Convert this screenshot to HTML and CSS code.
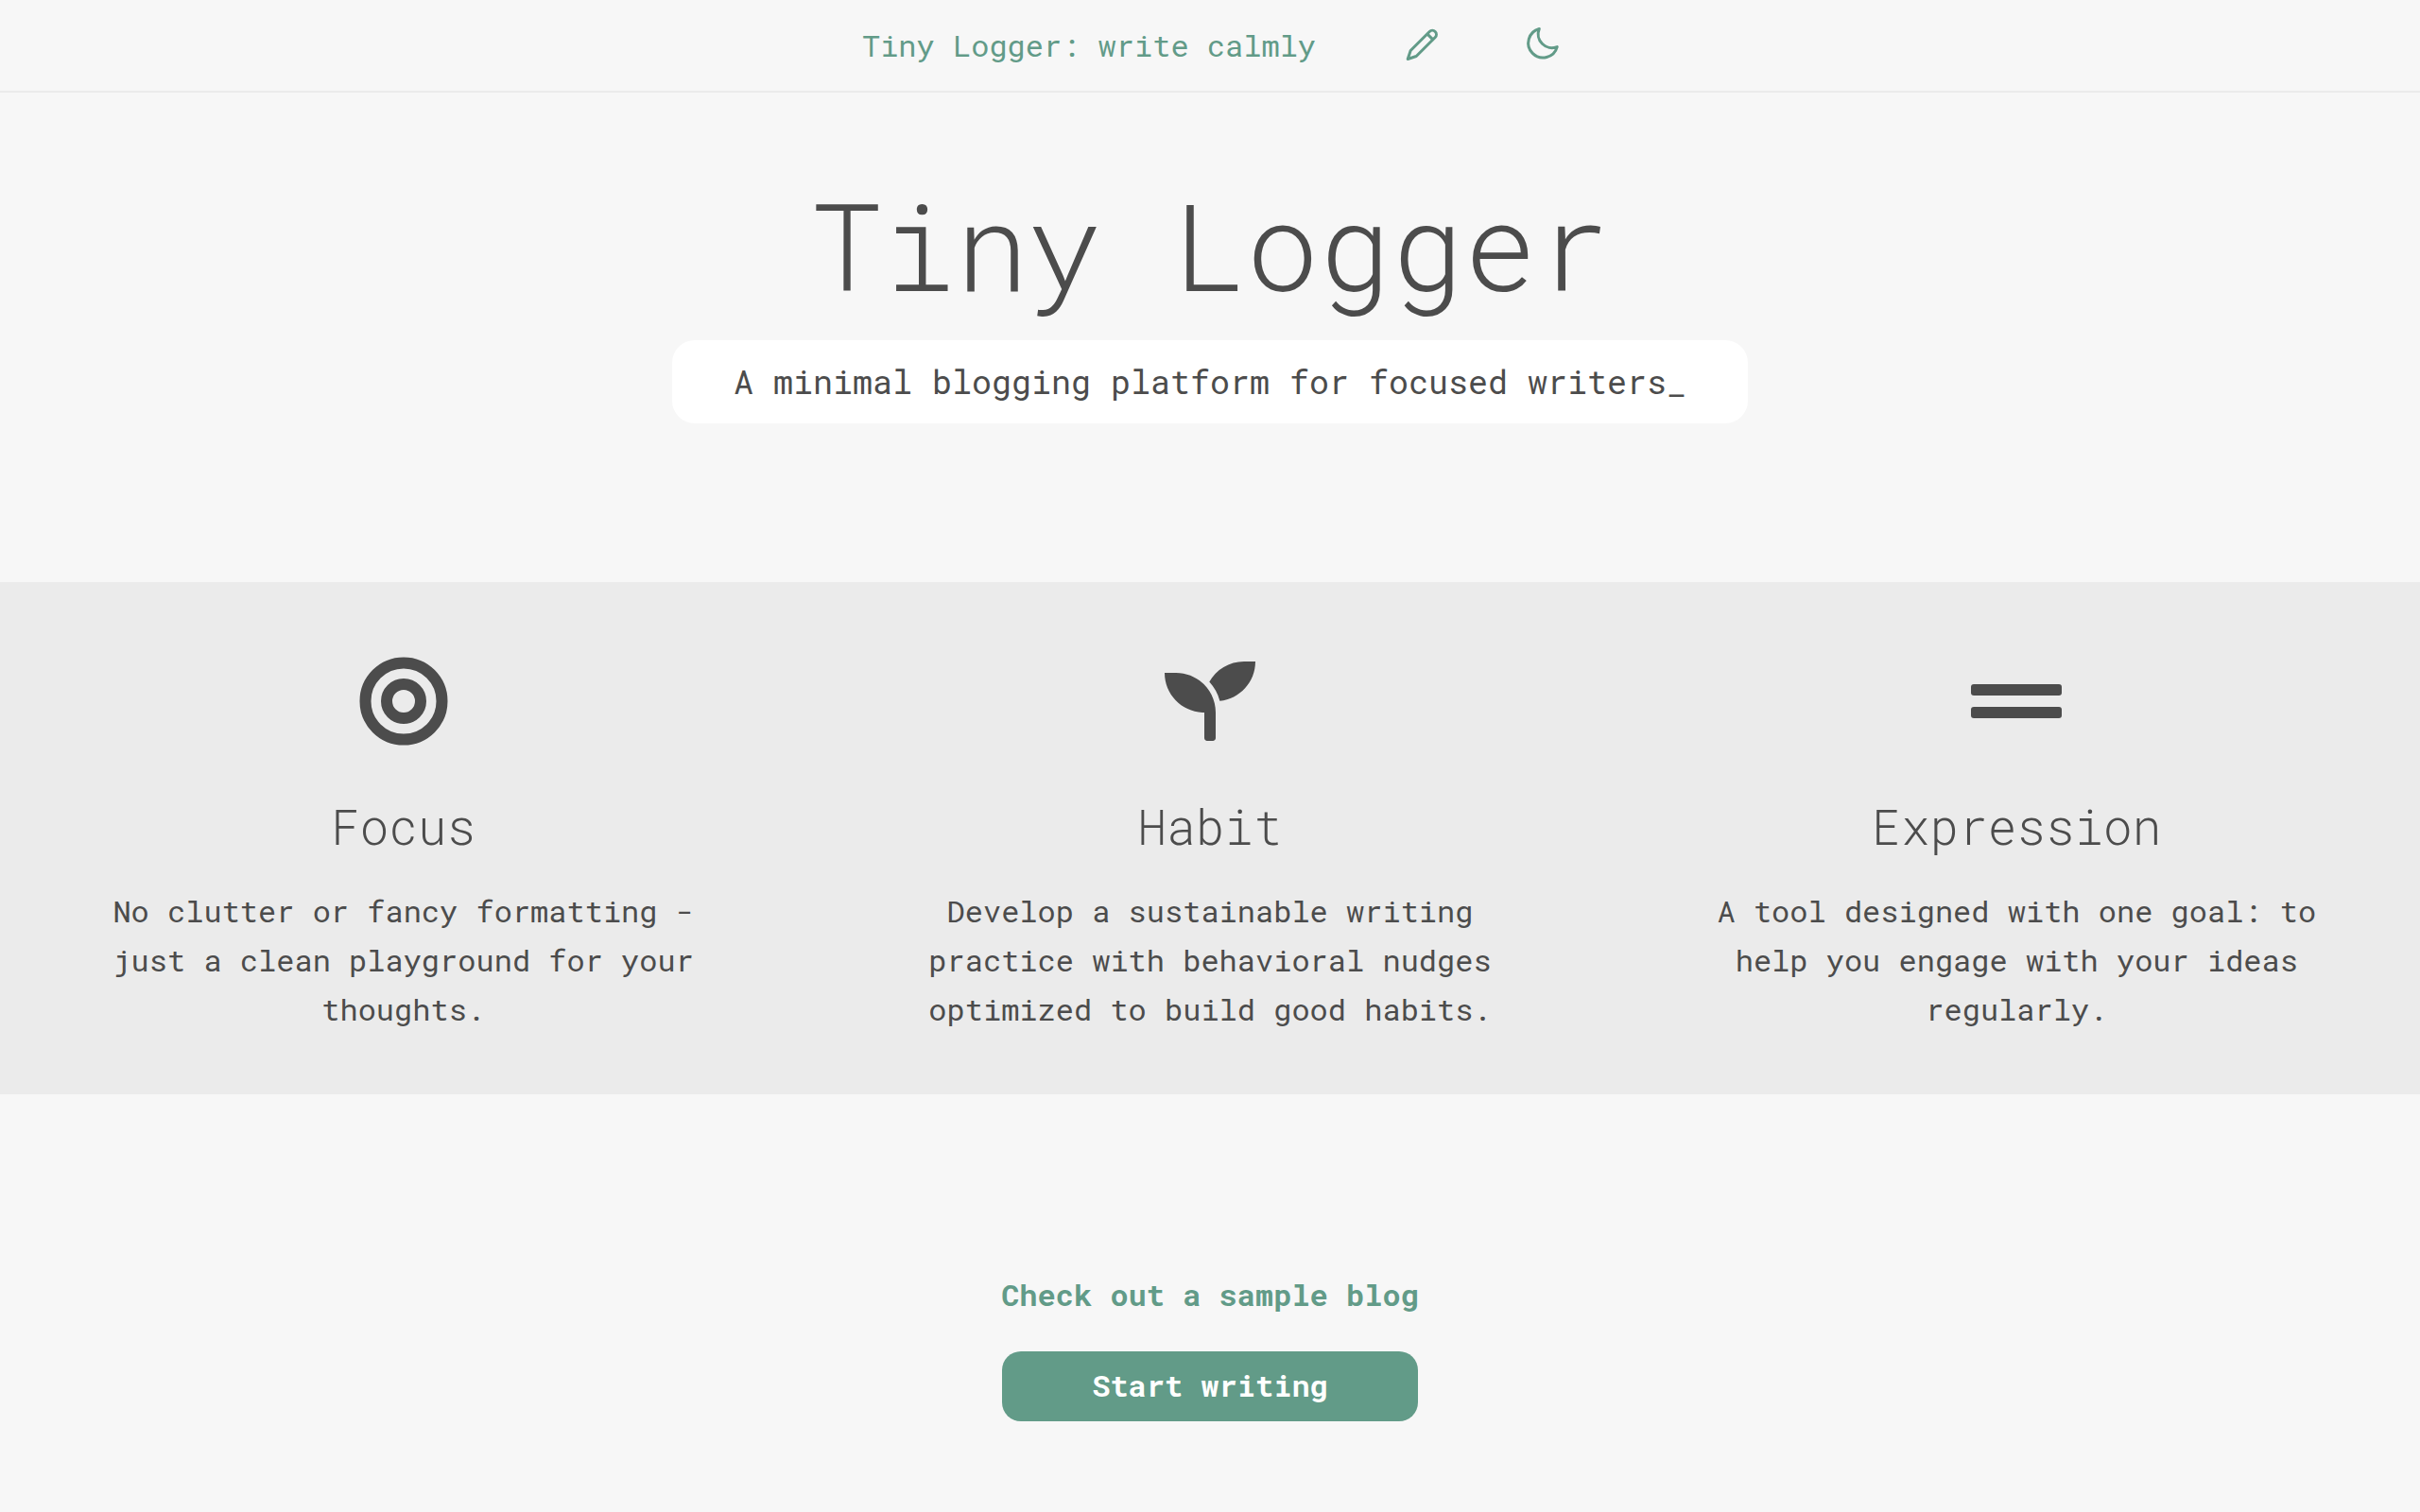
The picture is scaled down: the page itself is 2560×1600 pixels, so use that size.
FILE: index.html
```html
<!DOCTYPE html>
<html lang="en">
<head>
<meta charset="utf-8">
<title>Tiny Logger: write calmly</title>
<link rel="stylesheet" href="styles.css">
</head>
<body>
<header class="nav">
  <a class="brand" href="#">Tiny Logger: write calmly</a>
  <button class="icon-button" type="button" aria-label="Write">
    <svg viewBox="4 4 40 40" class="nav-icon"><path d="M9.200 38.500L12.200 29.500 32.200 9.500a4.240 4.240 0 0 1 6 6L18.200 35.500ZM29.800 11.900l6 6"/></svg>
  </button>
  <button class="icon-button" type="button" aria-label="Dark mode">
    <svg viewBox="4 6 40 40" class="nav-icon"><path d="M20.300 8.500A14.600 14.600 0 0 0 39.200 27.600 15.500 15.500 0 1 1 20.300 8.500Z"/></svg>
  </button>
</header>
<main>
  <section class="hero">
    <h1 class="title">Tiny Logger</h1>
    <p class="tagline">A minimal blogging platform for focused writers_</p>
  </section>
  <section class="features">
    <article class="feature">
      <svg class="feature-icon" viewBox="0 0 96 96"><g fill="none" stroke="currentColor" stroke-width="12"><circle cx="48" cy="48" r="40.500"/><circle cx="48" cy="48" r="18"/></g></svg>
      <h2 class="feature-title">Focus</h2>
      <p class="feature-text">No clutter or fancy formatting - just a clean playground for your thoughts.</p>
    </article>
    <article class="feature">
      <svg class="feature-icon" viewBox="0 0 512 512"><path fill="currentColor" d="M64 96H0c0 123.700 100.300 224 224 224v144c0 8.800 7.200 16 16 16h32c8.800 0 16-7.200 16-16V320C288 196.300 187.700 96 64 96zm384-64c-84.200 0-157.400 46.500-195.700 115.200 27.700 30.200 48.200 66.900 59 107.600C424 243.100 512 147.900 512 32h-64z"/></svg>
      <h2 class="feature-title">Habit</h2>
      <p class="feature-text">Develop a sustainable writing practice with behavioral nudges optimized to build good habits.</p>
    </article>
    <article class="feature">
      <svg class="feature-icon" viewBox="0 0 96 96"><g fill="currentColor"><rect y="30" width="96" height="12" rx="3"/><rect y="54" width="96" height="12" rx="3"/></g></svg>
      <h2 class="feature-title">Expression</h2>
      <p class="feature-text">A tool designed with one goal: to help you engage with your ideas regularly.</p>
    </article>
  </section>
  <section class="actions">
    <a class="sample" href="#">Check out a sample blog</a>
    <button class="start" type="button">Start writing</button>
  </section>
</main>
</body>
</html>
```
FILE: styles.css
```css
* { box-sizing: border-box; margin: 0; }
body { background: #f7f7f7; color: #4c4c4c; font: 400 32px/52px "Roboto Mono", "DejaVu Sans Mono", monospace; }
.nav { display: flex; justify-content: center; align-items: center; gap: 88px; padding: 22px 0 22px 4px; border-bottom: 2px solid #ebebeb; }
.brand, .sample { color: #629b88; text-decoration: none; }
.brand { margin-right: 4px; }
.icon-button { display: flex; padding: 0; border: 0; background: none; color: #629b88; }
.nav-icon { width: 40px; height: 40px; fill: none; stroke: currentColor; stroke-width: 3; stroke-linejoin: round; stroke-linecap: round; }
.hero { display: flex; flex-direction: column; align-items: center; padding: 84px 0 168px; }
.title { margin-bottom: 24px; font-size: 128px; line-height: 154px; font-weight: 300; }
.tagline { padding: 15px 65px 17px; border-radius: 24px; background: #fff; font-size: 35px; line-height: 56px; }
.features { display: grid; grid-template-columns: repeat(3, 1fr); background: #ebebeb; padding: 78px 0 64px; }
.feature { display: flex; flex-direction: column; align-items: center; padding: 0 96px; text-align: center; }
.feature-icon { width: 96px; height: 96px; }
.feature-title { margin: 48px 0 26px; font-size: 51px; line-height: 74px; font-weight: 300; }
.actions { display: flex; flex-direction: column; align-items: center; gap: 34px; padding: 186px 0 96px; }
.sample { font-weight: 700; }
.start { padding: 10px 95px 12px; border: 0; border-radius: 20px; background: #629b88; color: #fff; font: inherit; font-weight: 700; }
```
